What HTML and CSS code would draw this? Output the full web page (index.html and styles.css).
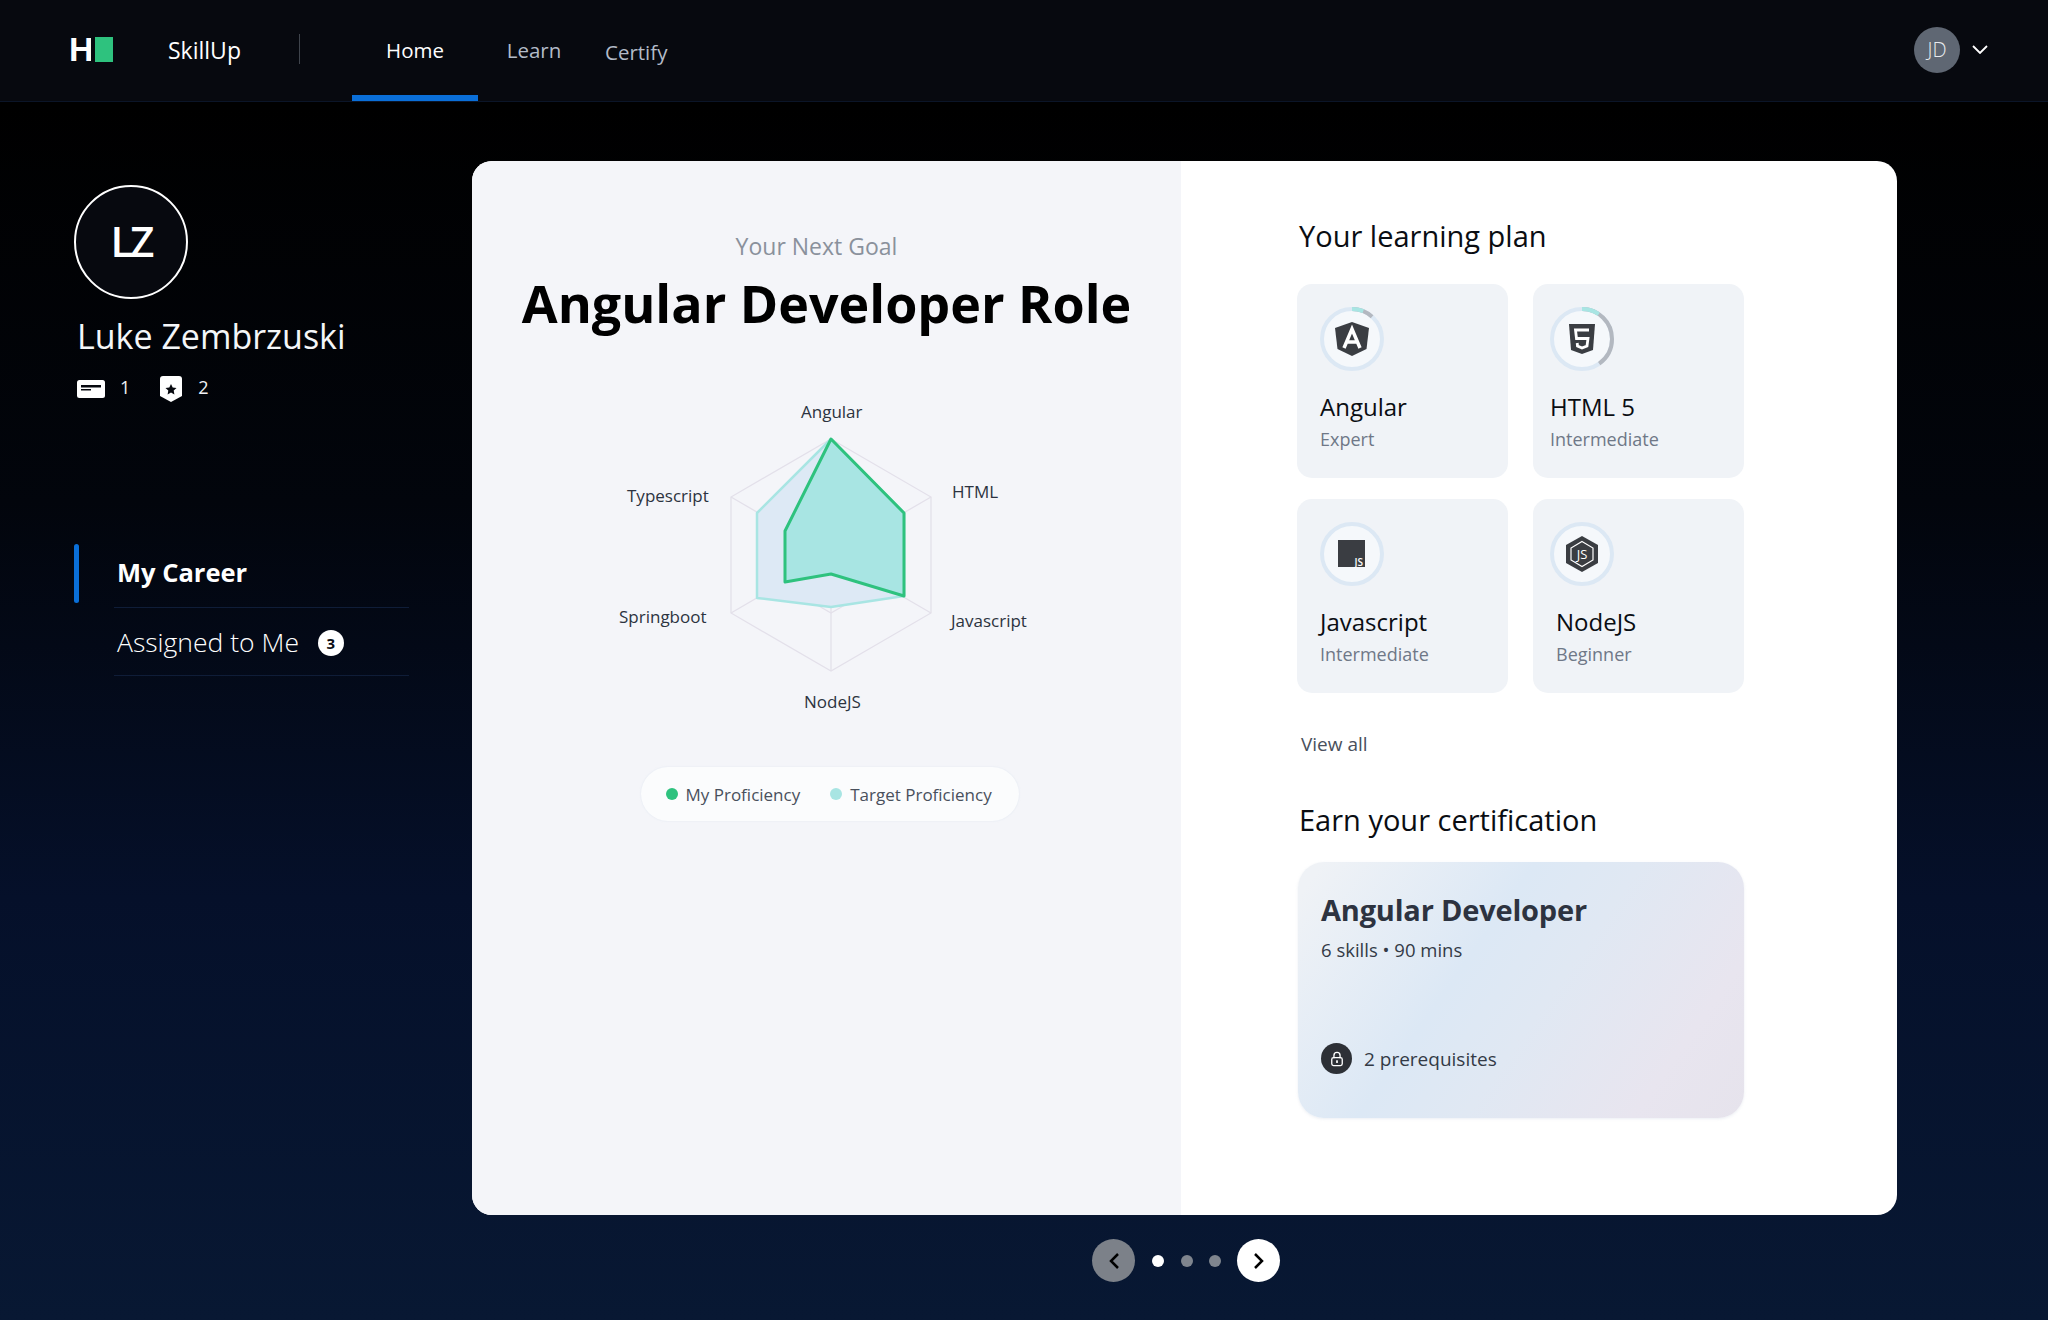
FILE: index.html
```html
<!DOCTYPE html>
<html lang="en">
<head>
<meta charset="utf-8">
<title>SkillUp</title>
<link rel="stylesheet" href="styles.css">
</head>
<body>
<header class="topbar">
  <div class="logo"><span class="logo-h">H</span><span class="logo-box"></span></div>
  <div class="brand">SkillUp</div>
  <div class="brand-sep"></div>
  <nav class="tabs">
    <a class="tab tab-active">Home</a>
    <a class="tab tab-learn">Learn</a>
    <a class="tab tab-certify">Certify</a>
  </nav>
  <div class="account">
    <div class="account-avatar">JD</div>
    <svg class="account-chevron" viewBox="0 0 16 9"><path d="M1 1l7 7 7-7"/></svg>
  </div>
</header>

<main class="main">
  <aside class="sidebar">
    <div class="avatar">LZ</div>
    <h2 class="username">Luke Zembrzuski</h2>
    <div class="stats">
      <svg class="stat-card" viewBox="0 0 28 18"><rect width="28" height="18" rx="2.5" fill="#fff"/><path d="M4 5h20v2.4H4zM4 9h10v1.6H4z" fill="#07090f"/></svg>
      <span class="stat-num">1</span>
      <svg class="stat-shield" viewBox="0 0 22 26"><path d="M3 0h16a3 3 0 0 1 3 3v17l-11 6-11-6V3a3 3 0 0 1 3-3z" fill="#fff"/><path d="M11 8l1.7 3.5 3.8.5-2.8 2.6.7 3.8-3.4-1.9-3.4 1.9.7-3.8L5.500 12l3.800-.5z" fill="#07090f"/></svg>
      <span class="stat-num">2</span>
    </div>
    <ul class="side-nav">
      <li class="side-item side-item-active">My Career</li>
      <li class="side-item">Assigned to Me <span class="count">3</span></li>
    </ul>
  </aside>

  <section class="stage">
    <div class="sheet">
      <div class="goal">
        <div class="goal-kicker">Your Next Goal</div>
        <h1 class="goal-title">Angular Developer Role</h1>
        <svg class="radar" viewBox="600 395 440 320">
          <g class="radar-grid">
            <polygon points="824,439 924,497 924,613 824,671 724,613 724,497"/>
            <polygon points="824,497 874,526 874,584 824,613 774,584 774,526"/>
            <path d="M824 439V671M724 497L924 613M924 497L724 613"/>
          </g>
          <polygon class="radar-target" points="824,439 897,513 897,596 824,607 750,598 750,513"/>
          <polygon class="radar-mine" points="824,439 897,513 897,596 824,574 778,582 778,531"/>
          <g class="radar-labels">
            <text x="794" y="418">Angular</text>
            <text x="945" y="498">HTML</text>
            <text x="944" y="627">Javascript</text>
            <text x="797" y="708">NodeJS</text>
            <text x="612" y="623">Springboot</text>
            <text x="620" y="502">Typescript</text>
          </g>
        </svg>
        <div class="legend">
          <span class="legend-item"><i class="dot dot-mine"></i>My Proficiency</span>
          <span class="legend-item"><i class="dot dot-target"></i>Target Proficiency</span>
        </div>
      </div>

      <div class="plan">
        <h3 class="plan-title">Your learning plan</h3>
        <div class="skills">
          <article class="skill">
            <svg class="ring" viewBox="0 0 64 64">
              <circle class="ring-base" cx="32" cy="32" r="30"/>
              <circle class="ring-grey" cx="32" cy="32" r="30" pathLength="360" stroke-dasharray="42 360" transform="rotate(-90 32 32)"/>
              <circle class="ring-teal" cx="32" cy="32" r="30" pathLength="360" stroke-dasharray="22 360" transform="rotate(-90 32 32)"/>
              <polygon class="ico" points="32,15 49,21 46.500,42 32,49 17.500,42 15,21"/>
              <path class="ico-line" d="M24 41L32 22L40 41M26.500 35H37.500"/>
            </svg>
            <div class="skill-name">Angular</div>
            <div class="skill-level">Expert</div>
          </article>
          <article class="skill skill-html">
            <svg class="ring" viewBox="0 0 64 64">
              <circle class="ring-base" cx="32" cy="32" r="30"/>
              <circle class="ring-grey" cx="32" cy="32" r="30" pathLength="360" stroke-dasharray="145 360" transform="rotate(-90 32 32)"/>
              <circle class="ring-teal" cx="32" cy="32" r="30" pathLength="360" stroke-dasharray="34 360" transform="rotate(-90 32 32)"/>
              <polygon class="ico" points="19,17 45,17 43,43 32,47 21,43"/>
              <path class="ico-line ico-five" d="M39 23H25.500L26.500 31.500H38L37 39L32 41L27.500 39L27.200 36"/>
            </svg>
            <div class="skill-name">HTML 5</div>
            <div class="skill-level">Intermediate</div>
          </article>
          <article class="skill">
            <svg class="ring" viewBox="0 0 64 64">
              <circle class="ring-base" cx="32" cy="32" r="30"/>
              <rect class="ico" x="18" y="18" width="27" height="27"/>
              <text class="ico-text" x="43" y="43.500" text-anchor="end">JS</text>
            </svg>
            <div class="skill-name">Javascript</div>
            <div class="skill-level">Intermediate</div>
          </article>
          <article class="skill skill-node">
            <svg class="ring" viewBox="0 0 64 64">
              <circle class="ring-base" cx="32" cy="32" r="30"/>
              <polygon class="ico" points="32,14 48,23 48,41 32,50 16,41 16,23"/>
              <polygon class="ico-hex" points="32,19.500 43,26 43,38 32,44.500 21,38 21,26"/>
              <text class="ico-text ico-text-node" x="32" y="36.500" text-anchor="middle">JS</text>
            </svg>
            <div class="skill-name">NodeJS</div>
            <div class="skill-level">Beginner</div>
          </article>
        </div>
        <a class="view-all">View all</a>
        <h3 class="cert-title">Earn your certification</h3>
        <article class="cert">
          <h4 class="cert-name">Angular Developer</h4>
          <div class="cert-meta">6 skills • 90 mins</div>
          <div class="cert-foot">
            <span class="lock">
              <svg viewBox="0 0 16 18"><path d="M4.500 8V5a3.500 3.500 0 0 1 7 0v3" fill="none" stroke="#fff" stroke-width="1.500"/><rect x="2" y="7.500" width="12" height="9" rx="2" fill="none" stroke="#fff" stroke-width="1.500"/><rect x="7" y="10.500" width="2" height="3" fill="#fff"/></svg>
            </span>
            <span>2 prerequisites</span>
          </div>
        </article>
      </div>
    </div>

    <div class="pager">
      <button class="pager-btn pager-prev"><svg viewBox="0 0 12 18"><path d="M10 2L3 9l7 7"/></svg></button>
      <span class="pager-dot pager-dot-on"></span>
      <span class="pager-dot"></span>
      <span class="pager-dot"></span>
      <button class="pager-btn pager-next"><svg viewBox="0 0 12 18"><path d="M2 2l7 7-7 7"/></svg></button>
    </div>
  </section>
</main>
</body>
</html>
```

FILE: styles.css
```css
* { box-sizing: border-box; }
html, body { margin: 0; padding: 0; }
body {
  width: 2048px;
  height: 1320px;
  overflow: hidden;
  font-family: "Open Sans", "Noto Sans", sans-serif;
  color: #fff;
  background: linear-gradient(180deg, #000 8%, #02050c 38%, #05102a 68%, #081833 100%);
}
h1, h2, h3, h4, ul { margin: 0; padding: 0; }

/* top bar */
.topbar {
  height: 102px;
  display: flex;
  align-items: stretch;
  background: #07090f;
  border-bottom: 1px solid #0b1528;
  padding-left: 69px;
}
.logo { display: flex; align-items: flex-start; gap: 4px; padding-top: 37px; width: 99px; }
.logo-h { font: 700 34px/25px "Liberation Sans", sans-serif; width: 22px; height: 25px; overflow: hidden; display: block; }
.logo-box { width: 18px; height: 25px; background: #2ec27e; }
.brand { font-size: 23px; font-weight: 500; line-height: 100px; width: 131px; }
.brand-sep { width: 1px; height: 30px; margin-top: 34px; background: #3f444c; }
.tabs { display: flex; margin-left: 52px; }
.tab { width: 126px; text-align: center; font-size: 20.500px; line-height: 100px; height: 101px; }
.tab-active { border-bottom: 6px solid #0a6fd8; }
.tab-learn { color: #b3bbc8; width: 108px; margin-left: 6px; padding-right: 8px; }
.tab-certify { color: #b3bbc8; width: auto; margin-left: 0; line-height: 104px; padding-left: 13px; }
.account { margin-left: auto; display: flex; align-items: center; padding: 0 60px 2px 0; gap: 12px; }
.account-avatar {
  width: 46px; height: 46px; border-radius: 50%;
  background: #5f6773; color: #e8ebef;
  font-size: 20px; font-weight: 300; line-height: 46px; text-align: center;
}
.account-chevron { width: 16px; height: 9px; fill: none; stroke: #fff; stroke-width: 1.800; }

/* layout */
.main { display: flex; padding-top: 59px; }
.sidebar { width: 472px; padding: 24px 0 0 74px; }
.stage { width: 1425px; }

/* sidebar */
.avatar {
  width: 114px; height: 114px; border: 2px solid #fff; border-radius: 50%;
  background: #07090f;
  font-size: 42px; font-weight: 600; letter-spacing: -3px;
  line-height: 108px; text-align: center;
}
.username { font-size: 34px; font-weight: 500; line-height: 46px; margin: 14px 0 0 3px; color: #f4f6f8; white-space: nowrap; }
.stats { display: flex; align-items: center; margin: 15px 0 0 3px; height: 26px; font-size: 18px; }
.stat-card { width: 28px; height: 18px; margin-top: 3px; }
.stat-num { font-weight: 400; color: #f0f2f5; }
.stat-card + .stat-num { margin: 0 30px 0 15px; }
.stat-shield { width: 22px; height: 26px; margin-right: 16px; margin-top: 3px; }
.side-nav { list-style: none; margin: 139px 0 0 3px; width: 332px; }
.side-item {
  margin-left: 37px;
  height: 68px;
  border-bottom: 1px solid #0f1d38;
  font-size: 26.500px;
  font-weight: 300;
  line-height: 68px;
  padding-left: 3px;
  position: relative;
  white-space: nowrap;
}
.side-item-active { font-weight: 700; font-size: 25.500px; height: 69px; line-height: 66px; }
.side-item-active::before {
  content: ""; position: absolute; left: -40px; top: 5px;
  width: 5px; height: 59px; border-radius: 3px; background: #0a6fd8;
}
.count {
  display: inline-block; width: 26px; height: 26px; border-radius: 50%;
  background: #fff; color: #0a0d14;
  font-size: 15px; font-weight: 700; line-height: 26px; text-align: center;
  margin-left: 12px; vertical-align: 3px;
}

/* sheet */
.sheet {
  display: flex;
  width: 1425px;
  height: 1054px;
  border-radius: 20px;
  overflow: hidden;
  background: #fff;
  color: #0a0d12;
}
.goal {
  width: 709px;
  background: #f4f5f9;
  display: flex; flex-direction: column; align-items: center;
  padding-top: 69px;
}
.goal-kicker { font-size: 23px; line-height: 32px; color: #8a919c; margin-right: 20px; }
.goal-title { font-size: 52px; font-weight: 700; line-height: 70px; margin-top: 6px; color: #000; white-space: nowrap; }
.radar { width: 440px; height: 320px; margin-top: 57px; flex: none; }
.radar-grid polygon, .radar-grid path { fill: none; stroke: #e3e0ea; stroke-width: 1.300; }
.radar-target { fill: #dde9f5; stroke: #a8e5e3; stroke-width: 2.500; stroke-linejoin: round; }
.radar-mine { fill: #a8e5e3; stroke: #2ec27e; stroke-width: 3; stroke-linejoin: round; }
.radar-labels text { font-family: "Open Sans", sans-serif; font-size: 17px; fill: #2c3340; }
.legend {
  display: flex; align-items: center; gap: 30px;
  margin: 52px 0 0 6px;
  width: 378px; height: 54px; padding-left: 25px;
  border-radius: 27px;
  background: #fbfcfd;
  box-shadow: 0 0 2px rgba(190, 205, 225, .35);
  font-size: 17px; color: #49505c;
}
.legend-item { display: flex; align-items: center; white-space: nowrap; }
.dot { width: 12px; height: 12px; border-radius: 50%; margin-right: 8px; }
.dot-mine { background: #2ec27e; }
.dot-target { background: #a8e5e3; }

/* plan */
.plan { flex: 1; padding: 55px 0 0 116px; }
.plan-title, .cert-title { font-size: 29px; font-weight: 500; line-height: 40px; margin-left: 2px; color: #0a0d12; white-space: nowrap; }
.skills {
  display: grid;
  grid-template-columns: 211px 211px;
  grid-auto-rows: 194px;
  column-gap: 25px;
  row-gap: 21px;
  margin-top: 28px;
}
.skill { background: #f0f3f7; border-radius: 15px; padding: 23px 0 0 23px; }
.skill-html { padding-left: 17px; }
.skill-node { padding-left: 17px; }
.ring { display: block; width: 64px; height: 64px; }
.ring-base { fill: #f5f8fb; stroke: #dce8f4; stroke-width: 4; }
.ring-grey { fill: none; stroke: #b3b8c0; stroke-width: 4; }
.ring-teal { fill: none; stroke: #a8e5e3; stroke-width: 4; }
.ico { fill: #3a3d42; }
.ico-line { fill: none; stroke: #fff; stroke-width: 3.500; }
.ico-five { stroke-width: 2.800; }
.ico-hex { fill: none; stroke: #fff; stroke-width: 1.200; }
.ico-text { font-family: "Open Sans", sans-serif; font-size: 10px; font-weight: 600; fill: #fff; }
.ico-text-node { font-size: 13px; font-weight: 400; }
.skill-name { font-size: 24px; font-weight: 500; line-height: 32px; margin-top: 20px; color: #0a0d12; }
.skill-level { font-size: 18px; line-height: 24px; margin-top: 4px; color: #6f7887; }
.skill-html .skill-name, .skill-html .skill-level { margin-left: 0; }
.skill-node .skill-name, .skill-node .skill-level { margin-left: 6px; }
.view-all { display: block; font-size: 19px; line-height: 26px; margin: 38px 0 0 4px; color: #49505c; }
.cert-title { margin-top: 43px; }
.cert {
  display: flex; flex-direction: column;
  margin: 22px 0 0 1px;
  width: 446px; height: 256px;
  padding: 28px 23px 44px;
  border-radius: 26px;
  background: linear-gradient(125deg, #eff2f6 4%, #dce8f5 38%, #e0e8f3 55%, #e8e5ef 82%, #e6e3ec 100%);
  box-shadow: 0 1px 3px rgba(190, 200, 215, .3);
}
.cert-name { font-size: 29px; font-weight: 700; line-height: 40px; color: #2d3340; letter-spacing: -.2px; white-space: nowrap; }
.cert-meta { font-size: 18.500px; line-height: 26px; margin-top: 7px; color: #333a46; }
.cert-foot { display: flex; align-items: center; gap: 12px; margin-top: auto; font-size: 19px; color: #333a46; }
.lock { width: 31px; height: 31px; border-radius: 50%; background: #2d3036; display: flex; align-items: center; justify-content: center; }
.lock svg { width: 14px; height: 16px; }

/* pager */
.pager { display: flex; align-items: center; justify-content: center; margin: 24px 0 0 3px; }
.pager-btn { width: 43px; height: 43px; border: 0; border-radius: 50%; padding: 0; display: flex; align-items: center; justify-content: center; }
.pager-btn svg { width: 12px; height: 18px; fill: none; stroke: #000; stroke-width: 2.500; }
.pager-prev { background: #7c8189; margin-right: 17px; }
.pager-next { background: #fff; margin-left: 16px; }
.pager-dot { width: 12px; height: 12px; border-radius: 50%; background: #7f858e; margin-left: 16.500px; }
.pager-prev + .pager-dot { margin-left: 0; }
.pager-dot-on { background: #fff; }
```
